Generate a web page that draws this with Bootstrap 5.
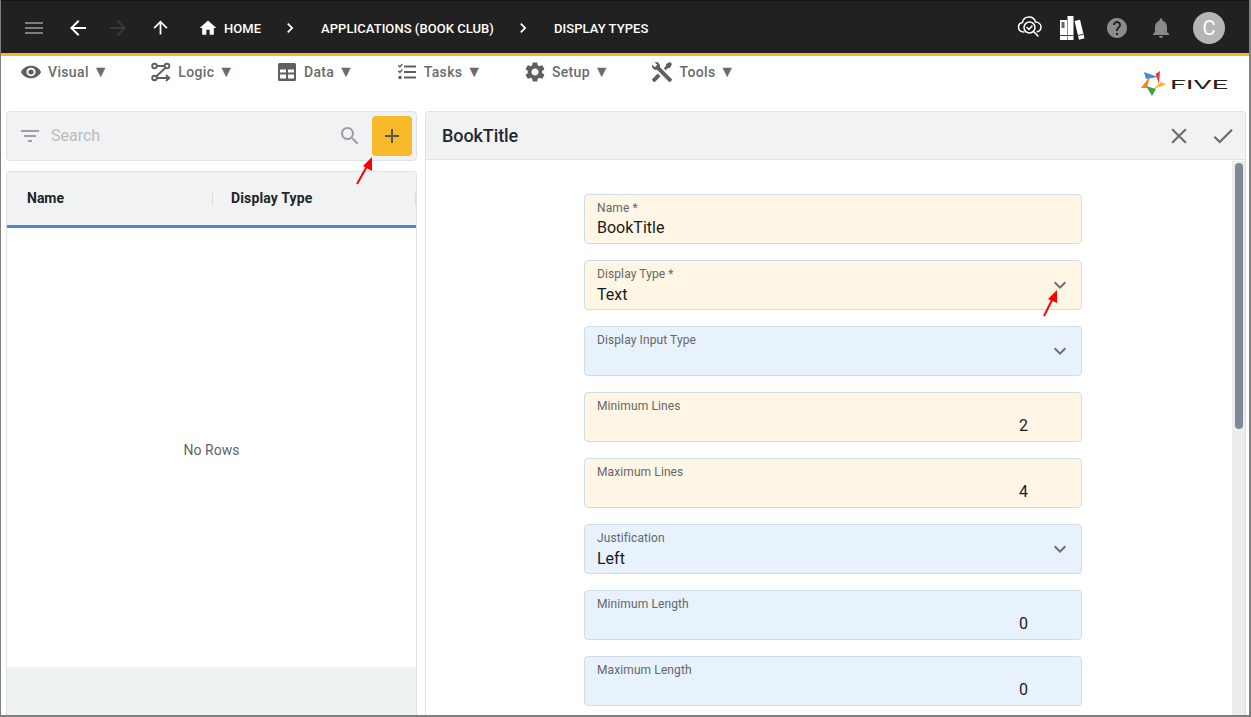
<!DOCTYPE html>
<html lang="en">
<head>
<meta charset="utf-8">
<title>Display Types</title>
<link href="https://cdn.jsdelivr.net/npm/bootstrap@5.3.0/dist/css/bootstrap.min.css" rel="stylesheet">
<style>
html,body{margin:0;height:717px;overflow:hidden;background:#fff}
body{font-family:Roboto,"Liberation Sans",sans-serif}
.frame{height:717px;border-left:1px solid #7f7f7f;border-right:2px solid #7f7f7f;border-bottom:2px solid #7f7f7f;position:relative;overflow:hidden}
.topbar{height:56px;background:#212121;border-top:1px solid #161616;border-bottom:3px solid #f8b62d;color:#fff;padding-top:1px}
.topbar svg{display:block;fill:currentColor}
.tb-menu{color:#7d7d7d;margin-left:21px}
.tb-back{margin-left:20px}
.tb-fwd{color:#3a3a3a;margin-left:16px}
.tb-up{margin-left:20px}
.tb-home{margin-left:27px}
.crumb{font-size:13px;font-weight:500;text-transform:uppercase;line-height:1;white-space:nowrap;letter-spacing:.05px;margin-top:2px}
.crumb-home{margin-left:6px}
.sep{margin:0 21px 0 19px}
.tb-right{margin-left:auto;margin-right:24px}
.avatar{width:32px;height:32px;border-radius:50%;background:#b5b5b5;font-size:20px;color:#fff;margin-left:20px}
.ic-books{margin-left:17px}
.ic-help{color:#8b8b8b;margin-left:20px}
.ic-bell{color:#8b8b8b;margin-left:20px}
.menubar{height:55px;padding:4px 0 0 19px;color:#616161;position:relative}
.mi{font-size:14px;font-weight:500;letter-spacing:.35px;margin-right:42.5px;height:24px;white-space:nowrap;color:#6b6b6b}
.mi svg{fill:#5f5f5f;display:block;margin-right:7px}
.mi svg.eye{width:22px;margin-right:6px}
.mi b{font-weight:500;font-size:16px;line-height:1}
.logo{position:absolute;right:19px;top:13px}
.panels{gap:8px;padding:0 3px 0 5px;height:604px}
.leftcol{width:411px;flex:none}
.bar{height:50px;background:#f1f2f4;border:1px solid #dfe1e4;border-radius:4px;padding-left:7px}
.searchtxt{font-size:16px;color:#b9bcc0;margin-left:9px}
.addbtn{width:40px;height:40px;background:#f8b92b;border:0;border-radius:4px;padding:0;margin:0 4px 0 10px;color:#555}
.grid{margin-top:10px;border:1px solid #dfe1e4;border-bottom:0;border-radius:4px 4px 0 0;height:544px;background:#fff}
.grid-head{height:56px;background:#f1f2f4;border-bottom:3px solid #4a86d1;font-size:14px;font-weight:700;color:#212529}
.gh1{width:205px;padding-left:20px}
.gh2{flex:1;padding-left:18px;letter-spacing:.15px;height:14px;line-height:12px;border-left:1px solid #dcdee0}
.gh3{width:1px;height:14px;background:#dcdee0}
.norows{font-size:14px;color:#5f6368;flex:1;padding-top:5px}
.grid-foot{height:48px;background:#eef2f3}
.rightcol{flex:1;min-width:0;border:1px solid #dfe1e4;border-bottom:0;border-radius:4px 4px 0 0}
.head{height:49px;background:#f1f2f4;border-bottom:1px solid #dfe1e4;padding:0 9px 0 16px}
.head h1{font-size:18px;font-weight:500;margin:0;color:#1f2933;letter-spacing:-.1px}
.head svg{fill:#6b6b6b;display:block}
.head svg+svg{margin-left:18px}
.formwrap{min-height:0;overflow:hidden}
.form{padding:34px 0 0 158px;flex:1;overflow:hidden}
.fld{width:498px;height:50px;border:1px solid #cfdde9;border-radius:4px;margin-bottom:16px;padding:6px 12px 0;position:relative}
.fld.req{background:#fff6e5}
.fld.opt{background:#e8f2fd}
.fld label{display:block;font-size:12px;line-height:14px;color:#666;letter-spacing:.1px}
.fld .val{font-size:16px;line-height:20px;margin-top:3px;height:20px;color:#1b1b1b}
.fld .sel{margin-top:4px}
.fld .num{text-align:right;padding-right:41px}
.fld svg{position:absolute;right:9px;top:12px;fill:#6f6f6f}
.sb{width:13px;flex:none;background:#ededed;margin-top:1px;padding:2px 2px 0 3px}
.thumb{height:266px;background:#808897;border-radius:5px}
.arrow{position:absolute;pointer-events:none}
</style>
</head>
<body>
<div class="frame">
  <header class="topbar d-flex align-items-center">
    <svg class="tb-menu" width="24" height="24" viewBox="0 0 24 24"><path d="M3 18h18v-2H3v2zm0-5h18v-2H3v2zm0-7v2h18V6H3z"/></svg>
    <svg class="tb-back" width="24" height="24" viewBox="0 0 24 24"><path d="M20 11H7.83l5.59-5.59L12 4l-8 8 8 8 1.41-1.41L7.83 13H20v-2z"/></svg>
    <svg class="tb-fwd" width="24" height="24" viewBox="0 0 24 24"><path d="M12 4l-1.41 1.41L16.17 11H4v2h12.17l-5.58 5.59L12 20l8-8z"/></svg>
    <svg class="tb-up" width="21" height="21" viewBox="0 0 24 24"><path d="M4 12l1.41 1.41L11 7.83V20h2V7.83l5.58 5.59L20 12l-8-8-8 8z"/></svg>
    <svg class="tb-home" width="20" height="20" viewBox="0 0 24 24"><path d="M10 20v-6h4v6h5v-8h3L12 3 2 12h3v8z"/></svg>
    <span class="crumb crumb-home">Home</span>
    <svg class="sep" width="20" height="20" viewBox="0 0 24 24"><path d="M10 6L8.59 7.41 13.17 12l-4.58 4.59L10 18l6-6z"/></svg>
    <span class="crumb">Applications (Book Club)</span>
    <svg class="sep" width="20" height="20" viewBox="0 0 24 24"><path d="M10 6L8.59 7.41 13.17 12l-4.58 4.59L10 18l6-6z"/></svg>
    <span class="crumb">Display Types</span>
    <div class="tb-right d-flex align-items-center">
      <svg width="26" height="24" viewBox="0 1.500 26 24" style="fill:none" stroke="#fff" stroke-width="1.5" stroke-linecap="round"><path d="M7 17.5C3.5 17.5 1.5 15.3 1.5 12.6c0-2.4 1.6-4.2 3.9-4.6C6 4.800 8.700 2.500 12 2.500c3.300 0 5.900 2.200 6.600 5.100 2.900.1 5.400 2.100 5.400 5 0 2.300-1.500 4.100-3.700 4.700"/><circle cx="12.500" cy="13" r="5.500"/><path d="M16.500 17l4.500 4.500"/><path d="M10 13l2 2 3-3.500"/></svg>
      <svg class="ic-books" width="25" height="24" viewBox="0 0 25 24"><path d="M0 4h7v20H0zM7.500 0h6v24h-6z"/><path d="M14.500 5l5.500-1.200 4.500 18.500-5.500 1.500z"/><path d="M1.500 6h3v6h-3z" fill="#666"/><path d="M0 19h7v1H0zM7.500 19h6v1h-6zM18 19l5-1.200.3 1-5 1.200z" fill="#444"/></svg>
      <svg class="ic-help" width="24" height="24" viewBox="0 0 24 24"><path d="M12 2C6.480 2 2 6.480 2 12s4.480 10 10 10 10-4.480 10-10S17.520 2 12 2zm1 17h-2v-2h2v2zm2.070-7.750l-.9.920C13.450 12.900 13 13.500 13 15h-2v-.5c0-1.100.45-2.100 1.170-2.830l1.240-1.260c.37-.36.59-.86.59-1.410 0-1.100-.9-2-2-2s-2 .9-2 2H8c0-2.210 1.790-4 4-4s4 1.790 4 4c0 .88-.36 1.680-.93 2.250z"/></svg>
      <svg class="ic-bell" width="24" height="24" viewBox="0 0 24 24"><path d="M12 22c1.100 0 2-.9 2-2h-4c0 1.100.89 2 2 2zm6-6v-5c0-3.070-1.640-5.640-4.500-6.320V4c0-.83-.67-1.500-1.500-1.500s-1.500.67-1.500 1.500v.68C7.630 5.360 6 7.920 6 11v5l-2 2v1h16v-1l-2-2z"/></svg>
      <div class="avatar d-flex align-items-center justify-content-center">C</div>
    </div>
  </header>

  <nav class="menubar d-flex align-items-start">
    <div class="mi d-flex align-items-center"><svg class="eye" width="22" height="20" viewBox="0 0 24 24" preserveAspectRatio="none"><path d="M12 4.500C7 4.500 2.730 7.610 1 12c1.730 4.390 6 7.500 11 7.500s9.270-3.110 11-7.500c-1.730-4.390-6-7.500-11-7.500zM12 17c-2.760 0-5-2.240-5-5s2.240-5 5-5 5 2.240 5 5-2.240 5-5 5zm0-8c-1.660 0-3 1.340-3 3s1.340 3 3 3 3-1.340 3-3-1.340-3-3-3z"/></svg>Visual&nbsp;<b>▼</b></div>
    <div class="mi d-flex align-items-center"><svg width="20" height="20" viewBox="0 0 20 20" style="fill:none" stroke="#5f5f5f" stroke-width="1.900"><circle cx="3.500" cy="4" r="2.300"/><circle cx="16" cy="4" r="2.300"/><circle cx="3.500" cy="16" r="2.300"/><path d="M6 4h7.500M14.500 5.800L5.500 14.300M6 16h12M15 13l3.200 3-3.200 3"/></svg>Logic&nbsp;<b>▼</b></div>
    <div class="mi d-flex align-items-center"><svg width="20" height="20" viewBox="0 0 20 20"><path fill-rule="evenodd" d="M2.500 1h15A1.500 1.500 0 0 1 19 2.500v15a1.500 1.500 0 0 1-1.500 1.500h-15A1.500 1.500 0 0 1 1 17.500v-15A1.500 1.500 0 0 1 2.500 1zM3 7.500V10.500h6V7.500zM11 7.500V10.500h6V7.500zM3 12.500V16.500h6V12.500zM11 12.500V16.500h6V12.500z"/></svg>Data&nbsp;<b>▼</b></div>
    <div class="mi d-flex align-items-center"><svg width="20" height="20" viewBox="0 0 20 20"><path d="M7 3.500h12v2H7zM7 9h12v2H7zM7 14.500h12v2H7z"/><circle cx="3" cy="15.500" r="1.800"/><path d="M.8 3.800l1.100-1 1 1 2-2.200 1 1-3 3.300zM.8 9.300l1.100-1 1 1 2-2.200 1 1-3 3.300z"/></svg>Tasks&nbsp;<b>▼</b></div>
    <div class="mi d-flex align-items-center"><svg width="20" height="20" viewBox="2 2 20 20"><path d="M19.140 12.940c.04-.3.06-.61.06-.94 0-.32-.02-.64-.07-.94l2.030-1.580c.18-.14.23-.41.12-.61l-1.920-3.320c-.12-.22-.37-.29-.59-.22l-2.390.96c-.5-.38-1.030-.7-1.620-.94l-.36-2.540c-.04-.24-.24-.41-.48-.41h-3.840c-.24 0-.43.17-.47.41l-.36 2.540c-.59.24-1.130.57-1.620.94l-2.390-.96c-.22-.08-.47 0-.59.22L2.740 8.870c-.12.21-.08.47.12.61l2.030 1.580c-.05.3-.09.63-.09.94s.02.64.07.94l-2.030 1.580c-.18.14-.23.41-.12.61l1.920 3.320c.12.22.37.29.59.22l2.390-.96c.5.38 1.030.7 1.620.94l.36 2.540c.05.24.24.41.48.41h3.840c.24 0 .44-.17.47-.41l.36-2.540c.59-.24 1.130-.56 1.620-.94l2.390.96c.22.08.47 0 .59-.22l1.920-3.320c.12-.22.07-.47-.12-.61l-2.010-1.580zM12 15.600c-1.980 0-3.600-1.620-3.600-3.600s1.620-3.600 3.600-3.600 3.600 1.620 3.600 3.600-1.620 3.600-3.600 3.600z"/></svg>Setup&nbsp;<b>▼</b></div>
    <div class="mi d-flex align-items-center"><svg width="20" height="20" viewBox="2 2 20 20"><path d="M21.710 20.290L20.290 21.710A1 1 0 0 1 18.880 21.710L7 9.850A3.810 3.810 0 0 1 6 10A4 4 0 0 1 2.220 4.700L4.760 7.240L5.290 6.710L6.710 5.290L7.240 4.760L4.700 2.220A4 4 0 0 1 10 6A3.810 3.810 0 0 1 9.850 7L21.710 18.880A1 1 0 0 1 21.710 20.290M2.290 18.880A1 1 0 0 0 2.290 20.290L3.710 21.710A1 1 0 0 0 5.120 21.710L10.590 16.250L7.760 13.420M20 2L16 4V6L13.830 8.170L15.830 10.170L18 8H20L22 4Z"/></svg>Tools&nbsp;<b>▼</b></div>
    <svg class="logo" width="90" height="28" viewBox="0 0 90 28">
      <path d="M4 3L18 8 6 10z" fill="#3f8ae0"/><path d="M20 2L19 15 15.500 5z" fill="#e53935"/><path d="M13.500 20L26 15.500 21 13z" fill="#f8b62d"/><path d="M6 17L16 20 12 27z" fill="#43a047"/><path d="M10 7L1 19H7z" fill="#f58220"/>
      <text x="30" y="20" font-family="Roboto,sans-serif" font-size="12.600" font-weight="400" fill="#222" textLength="58" lengthAdjust="spacingAndGlyphs">FIVE</text>
    </svg>
  </nav>

  <main class="panels d-flex">
    <section class="leftcol d-flex flex-column">
      <div class="bar d-flex align-items-center">
        <svg class="ms-1" width="24" height="24" viewBox="0 0 24 24" fill="#9aa0a6"><path d="M10 18h4v-2h-4v2zM3 6v2h18V6H3zm3 7h12v-2H6v2z"/></svg>
        <span class="searchtxt flex-grow-1">Search</span>
        <svg width="24" height="24" viewBox="0 0 24 24" fill="#9aa0a6"><path d="M15.500 14h-.79l-.28-.27C15.410 12.590 16 11.110 16 9.500 16 5.910 13.090 3 9.500 3S3 5.910 3 9.500 5.910 16 9.500 16c1.610 0 3.090-.59 4.230-1.570l.27.28v.79l5 4.990L20.490 19l-4.990-5zm-6 0C7.010 14 5 11.990 5 9.500S7.010 5 9.500 5 14 7.010 14 9.500 11.990 14 9.500 14z"/></svg>
        <button class="addbtn btn d-flex align-items-center justify-content-center" type="button" aria-label="Add"><svg width="24" height="24" viewBox="0 0 24 24" fill="#555"><path d="M19 13h-6v6h-2v-6H5v-2h6V5h2v6h6v2z"/></svg></button>
      </div>
      <div class="grid d-flex flex-column">
        <div class="grid-head d-flex align-items-center">
          <div class="gh1">Name</div>
          <div class="gh2">Display Type</div>
          <div class="gh3"></div>
        </div>
        <div class="norows d-flex align-items-center justify-content-center">No Rows</div>
        <div class="grid-foot"></div>
      </div>
    </section>
    <section class="rightcol d-flex flex-column">
      <div class="head d-flex align-items-center">
        <h1 class="flex-grow-1">BookTitle</h1>
        <svg width="26" height="26" viewBox="0 0 24 24"><path d="M19 6.410L17.590 5 12 10.590 6.410 5 5 6.410 10.590 12 5 17.590 6.410 19 12 13.410 17.590 19 19 17.590 13.410 12z"/></svg>
        <svg width="26" height="26" viewBox="0 0 24 24"><path d="M9 16.170L4.830 12l-1.420 1.410L9 19 21 7l-1.410-1.410z"/></svg>
      </div>
      <div class="formwrap d-flex flex-grow-1">
        <div class="form">
          <div class="fld req"><label>Name *</label><div class="val">BookTitle</div></div>
          <div class="fld req"><label>Display Type *</label><div class="val sel">Text</div><svg width="24" height="24" viewBox="0 0 24 24"><path d="M16.590 8.590L12 13.170 7.410 8.590 6 10l6 6 6-6z"/></svg></div>
          <div class="fld opt"><label>Display Input Type</label><div class="val"></div><svg width="24" height="24" viewBox="0 0 24 24"><path d="M16.590 8.590L12 13.170 7.410 8.590 6 10l6 6 6-6z"/></svg></div>
          <div class="fld req"><label>Minimum Lines</label><div class="val num">2</div></div>
          <div class="fld req"><label>Maximum Lines</label><div class="val num">4</div></div>
          <div class="fld opt"><label>Justification</label><div class="val sel">Left</div><svg width="24" height="24" viewBox="0 0 24 24"><path d="M16.590 8.590L12 13.170 7.410 8.590 6 10l6 6 6-6z"/></svg></div>
          <div class="fld opt"><label>Minimum Length</label><div class="val num">0</div></div>
          <div class="fld opt"><label>Maximum Length</label><div class="val num">0</div></div>
        </div>
        <div class="sb"><div class="thumb"></div></div>
      </div>
    </section>
  </main>

  <svg class="arrow" style="left:349px;top:150px" width="30" height="40" viewBox="0 0 30 40"><path d="M7 34L20 11" stroke="#f00" stroke-width="2"/><path d="M22 7l0 14-9-5z" fill="#f00"/></svg>
  <svg class="arrow" style="left:1035px;top:282px" width="30" height="40" viewBox="0 0 30 40"><path d="M8 34L19 12" stroke="#f00" stroke-width="2"/><path d="M21 8l0 13-9-4z" fill="#f00"/></svg>
</div>
<script src="https://cdn.jsdelivr.net/npm/bootstrap@5.3.0/dist/js/bootstrap.bundle.min.js"></script>
</body>
</html>
